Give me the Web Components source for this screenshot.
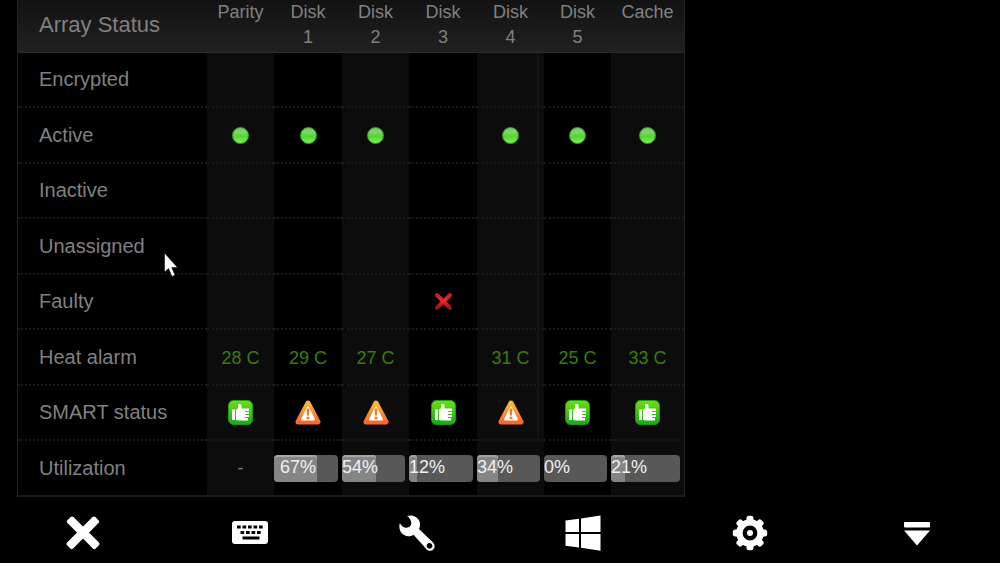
<!DOCTYPE html>
<html lang="en">
<head>
<meta charset="utf-8">
<title>Array Status</title>
<style>
  body { margin: 0; background: #000; color: #808080; font-family: "Liberation Sans", Arial, sans-serif; }
</style>
</head>
<body>
<nas-screen>
  <array-table></array-table>
  <tool-bar slot="footer">
    <tool-button label="Close"><svg viewBox="0 0 36 36"><g fill="#fff"><rect x="-2" y="13.500" width="40" height="8.500" rx="2" transform="rotate(45 18 18)"/><rect x="-2" y="13.500" width="40" height="8.500" rx="2" transform="rotate(-45 18 18)"/></g></svg></tool-button>
    <tool-button label="Keyboard"><svg viewBox="0 0 36 36"><rect x="0" y="6" width="36" height="23" rx="3" fill="#fff"/><path d="M5 12h26M8.500 17.500h21" stroke="#000" stroke-width="3" stroke-dasharray="3.700 1.800" fill="none"/><path d="M10.500 23h17" stroke="#000" stroke-width="3"/></svg></tool-button>
    <tool-button label="Tools"><svg viewBox="0 0 36 36"><path fill="#fff" fill-rule="evenodd" d="M8 1C13 -.800 19 1.500 20.700 7C21.400 9.700 21 12 20 14L34 27.500C36.300 30 36 33.500 33.700 35C31.500 36.400 29.300 36 27.800 34.500L14.500 19.700C11 21.800 6.500 22 3.300 18.800C.4 16 -.200 12 .8 8C2.300 10.800 4.500 12.800 7.500 12.800C10.500 12.500 12 11 12.300 8C12 5 10.500 2.500 8 1ZM30.500 28a2.900 2.900 0 1 0 .01 0Z"/></svg></tool-button>
    <tool-button label="Windows"><svg viewBox="0 0 36 36"><path fill="#fff" d="M.5 5.500L14 3.700V17H.5ZM16 3.400L35.500 .500V17H16ZM.5 19H14V32.500L.5 30.700ZM16 19H35.500V35.700L16 32.800Z"/></svg></tool-button>
    <tool-button label="Settings"><svg viewBox="0 0 36 36"><g fill="#fff"><circle cx="18" cy="18" r="13.800"/><rect x="14.500" y=".8" width="7" height="34.400" rx="2.500"/><rect x="14.500" y=".8" width="7" height="34.400" rx="2.500" transform="rotate(45 18 18)"/><rect x="14.500" y=".8" width="7" height="34.400" rx="2.500" transform="rotate(90 18 18)"/><rect x="14.500" y=".8" width="7" height="34.400" rx="2.500" transform="rotate(135 18 18)"/></g><circle cx="18" cy="18" r="5.200" fill="#fff" stroke="#000" stroke-width="4.400"/></svg></tool-button>
    <tool-button label="Hide"><svg viewBox="0 0 36 36"><rect x="5" y="7" width="26" height="5.500" rx="1" fill="#fff"/><path d="M5 15.500H31L18 30.500Z" fill="#fff"/></svg></tool-button>
  </tool-bar>
  <mouse-pointer slot="overlay"></mouse-pointer>
</nas-screen>

<script>
function define(name, render) {
  customElements.define(name, class extends HTMLElement {
    connectedCallback() {
      if (this.shadowRoot) return;
      this.attachShadow({ mode: "open" }).innerHTML = render(this);
    }
  });
}

define("nas-screen", () => `
  <style>
    :host { display: flex; flex-direction: column; position: relative; min-height: 100vh; box-sizing: border-box; }
    main { padding: 0 17px; }
  </style>
  <main><slot></slot></main>
  <slot name="footer"></slot>
  <slot name="overlay"></slot>`);

define("status-light", () => `
  <style>:host { display: block; } svg { display: block; margin: 0 auto; }</style>
  <svg width="17" height="17" viewBox="0 0 17 17" role="img" aria-label="yes">
    <defs>
      <linearGradient id="g" x1="0" y1="0" x2="0" y2="1"><stop offset="0" stop-color="#79c46a"/><stop offset=".3" stop-color="#7fd668"/><stop offset=".55" stop-color="#51d631"/><stop offset="1" stop-color="#86f25c"/></linearGradient>
    </defs>
    <circle cx="8.500" cy="8.500" r="8" fill="url(#g)" stroke="#2f9a1e" stroke-width="1"/>
  </svg>`);

define("fault-mark", () => `
  <style>:host { display: block; } svg { display: block; margin: 0 auto; }</style>
  <svg width="19" height="19" viewBox="0 0 19 19" role="img" aria-label="faulty">
    <defs><linearGradient id="g" gradientUnits="userSpaceOnUse" x1="0" y1="1" x2="0" y2="18"><stop offset="0" stop-color="#c01a1e"/><stop offset=".45" stop-color="#e62d30"/><stop offset="1" stop-color="#800a0c"/></linearGradient></defs>
    <path d="M3 3L16 16M16 3L3 16" stroke="url(#g)" stroke-width="4" stroke-linecap="round"/>
  </svg>`);

define("smart-state", el => `
  <style>:host { display: block; } svg { display: block; margin: 0 auto; }</style>
  ${el.getAttribute("state") === "good" ? `
  <svg width="25" height="25" viewBox="0 0 25 25" role="img" aria-label="good">
    <defs><linearGradient id="g" x1="0" y1="0" x2="0" y2="1"><stop offset="0" stop-color="#72dd16"/><stop offset="1" stop-color="#0fae17"/></linearGradient></defs>
    <rect x=".5" y=".5" width="24" height="24" rx="5" fill="url(#g)" stroke="#1f9a10"/>
    <path fill="#fff" d="M4 9.500H7V20H4ZM8 9.500L10 8.500V4.500Q11.500 3.500 13.500 5V8.500H21V11H17V12H21V14H17V15H21V17H17V18H20V20.500H11L8 20Z"/>
  </svg>` : `
  <svg width="26" height="25" viewBox="0 0 26 25" role="img" aria-label="warning">
    <defs><linearGradient id="g" x1="0" y1="0" x2="0" y2="1"><stop offset="0" stop-color="#f9bb30"/><stop offset="1" stop-color="#f9692e"/></linearGradient></defs>
    <path d="M13 3L23 22H3Z" fill="url(#g)" stroke="url(#g)" stroke-width="5" stroke-linejoin="round"/>
    <path d="M13 7.500L19 19.500H7Z" fill="#fff" stroke="#fff" stroke-width="2" stroke-linejoin="round"/>
    <path d="M11.500 8.500H14.500L14 15.500H12ZM11.600 16.800H14.400V19.200H11.600Z" fill="#f47a30"/>
  </svg>`}`);

define("usage-bar", el => {
  const v = el.getAttribute("value");
  return `
  <style>
    :host { display: block; padding-right: 4px; }
    .track { position: relative; height: 27px; border-radius: 4px; overflow: hidden; background: #585858; color: #f0f0f0; font-size: 18px; line-height: 25px; text-align: left; }
    .fill { position: absolute; inset: 0 auto 0 0; width: ${v}%; background: #858585; box-shadow: inset 0 2px 0 #a6a6a6; border-radius: 3px 3px 0 0; }
    span { position: relative; padding-left: ${el.hasAttribute("inset") ? 6 : 0}px; }
  </style>
  <div class="track" role="meter" aria-label="Utilization" aria-valuemin="0" aria-valuemax="100" aria-valuenow="${v}"><div class="fill"></div><span>${v}%</span></div>`;
});

define("array-table", () => {
  const names = ["Parity", "Disk 1", "Disk 2", "Disk 3", "Disk 4", "Disk 5", "Cache"];
  const light = "<status-light></status-light>";
  const good = '<smart-state state="good"></smart-state>';
  const warn = '<smart-state state="warn"></smart-state>';
  const use = (v, extra = "") => `<usage-bar value="${v}" ${extra}></usage-bar>`;
  const none = Array(7).fill("");
  const rows = [
    ["Encrypted", none],
    ["Active", [light, light, light, "", light, light, light]],
    ["Inactive", none],
    ["Unassigned", none],
    ["Faulty", ["", "", "", "<fault-mark></fault-mark>", "", "", ""]],
    ["Heat alarm", ["28 C", "29 C", "27 C", "", "31 C", "25 C", "33 C"], "heat"],
    ["SMART status", [good, warn, warn, good, warn, good, good]],
    ["Utilization", ["-", use(67, "inset"), use(54), use(12), use(34), use(0), use(21)], "usage"]
  ];
  return `
  <style>
    :host { display: block; max-width: 668px; }
    table { width: 100%; box-sizing: border-box; table-layout: fixed; border-spacing: 0; border: solid #222; border-width: 0 1px; }
    th, td { padding: 0; box-sizing: border-box; font-weight: normal; text-align: center; }
    thead tr { height: 53px; background: linear-gradient(#121212, #212121); }
    thead th { height: 53px; border-bottom: 1px solid #2a2a2a; vertical-align: top; font-size: 18px; line-height: 25px; }
    thead th:not(:first-child) { padding: 0 10px; }
    thead th:first-child { padding-top: 12px; font-size: 22px; }
    th:first-child { text-align: left; padding-left: 21px; }
    tbody th { font-size: 20px; }
    tbody td { font-size: 18px; }
    tbody tr { height: 55px; }
    tbody tr:nth-child(even) { height: 56px; }
    tbody th, tbody td { border-bottom: 2px dotted #191919; }
    tbody tr:last-child > * { border-bottom: 2px solid #1a1a1a; }
    tbody td:nth-child(even) { background: #0c0c0c; }
    tbody tr:not(:last-child) td:nth-child(6) { background: linear-gradient(90deg, #0c0c0c 60px, #131313 60px 62px, #0c0c0c 62px); }
    .heat td { color: #3b7c0f; padding-top: 2px; }
    .label { width: 189px; } .a { width: 67px; } .b { width: 68px; }
  </style>
  <table>
    <colgroup><col class="label"><col class="a"><col class="b"><col class="a"><col class="b"><col class="a"><col class="a"><col></colgroup>
    <thead><tr><th scope="col">Array Status</th>${names.map(n => `<th scope="col">${n}</th>`).join("")}</tr></thead>
    <tbody>${rows.map(([h, cells, c = ""]) => `<tr class="${c}"><th scope="row">${h}</th>${cells.map(x => `<td>${x}</td>`).join("")}</tr>`).join("")}</tbody>
  </table>`;
});

define("tool-bar", () => `
  <style>:host { display: grid; grid-template-columns: repeat(6, 1fr); padding-top: 6px; height: 60px; } </style>
  <slot></slot>`);

define("tool-button", el => `
  <style>
    :host { display: flex; justify-content: center; align-items: center; }
    button { display: block; border: 0; padding: 12px; background: none; cursor: pointer; }
    ::slotted(svg) { display: block; width: 36px; height: 36px; }
  </style>
  <button type="button" aria-label="${el.getAttribute("label")}"><slot></slot></button>`);

define("mouse-pointer", () => `
  <style>:host { position: absolute; left: 163px; top: 251px; pointer-events: none; } svg { display: block; }</style>
  <svg width="17" height="27" viewBox="0 0 17 27" aria-hidden="true"><path d="M1.500 2V21L5.500 17.500L9 25.500L12 24L8.700 16.500H14.500Z" fill="#fff" stroke="#000" stroke-width=".5"/></svg>`);
</script>
</body>
</html>
